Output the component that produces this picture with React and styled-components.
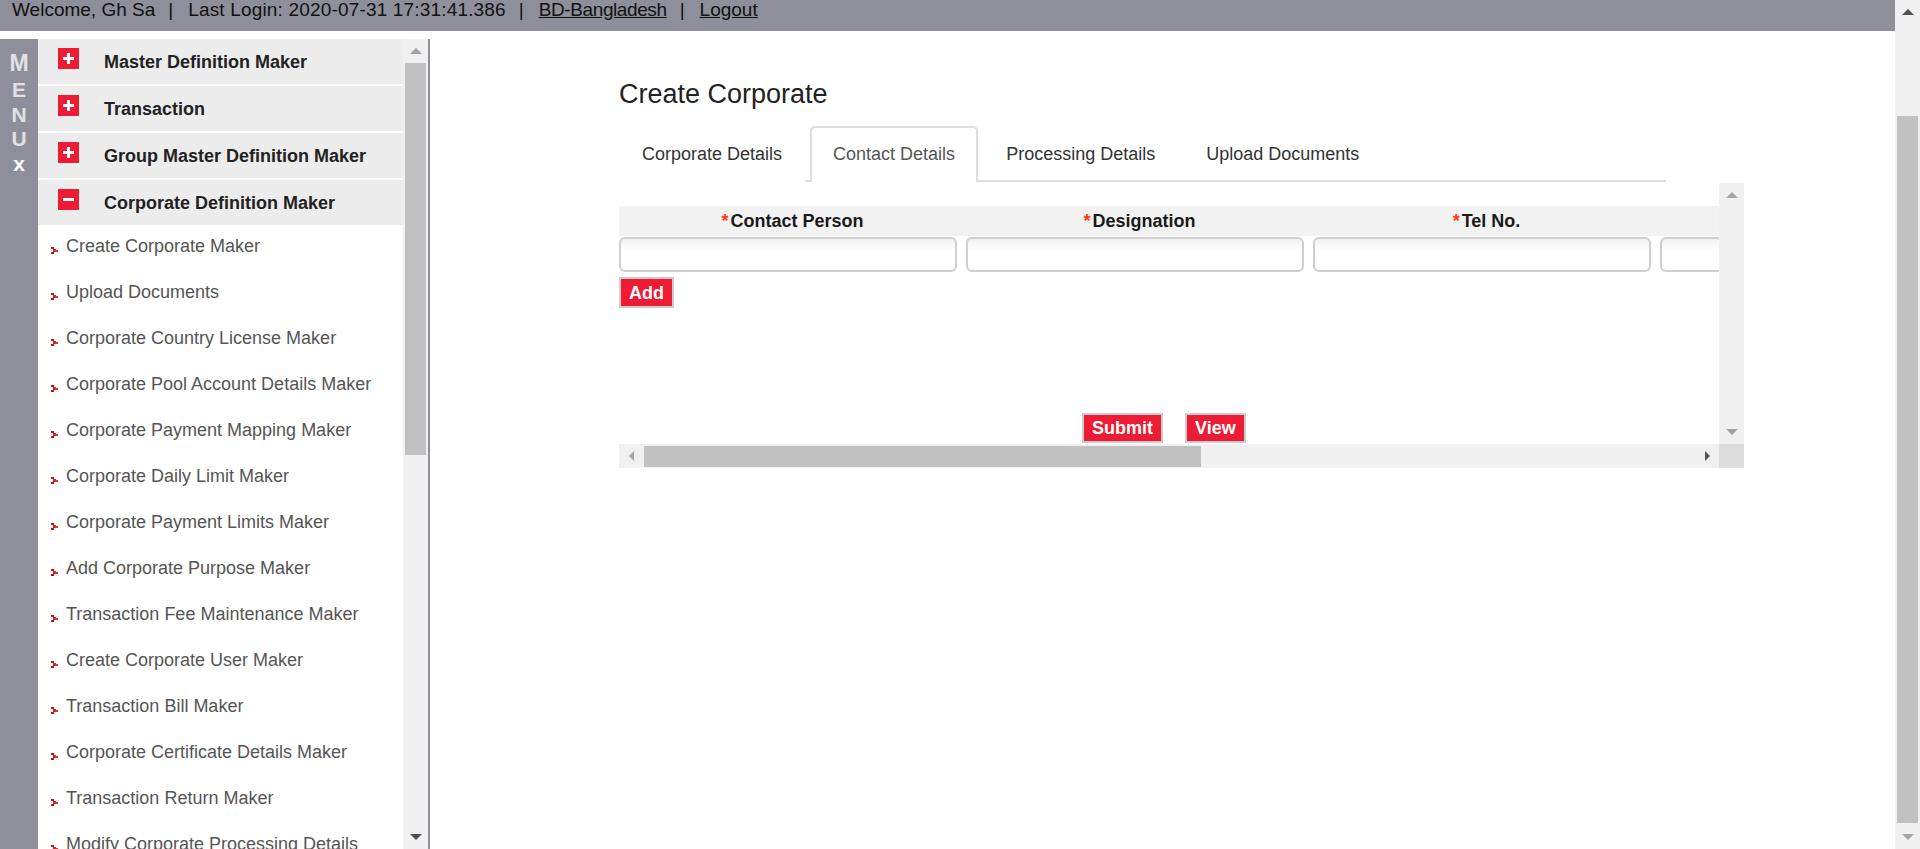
import React from 'react';
import styled, { createGlobalStyle, css } from 'styled-components';

const GlobalStyle = createGlobalStyle`
  html, body {
    margin: 0;
    padding: 0;
    height: 100%;
    overflow: hidden;
  }
  body {
    font-family: 'Liberation Sans', Arial, sans-serif;
    background: #fff;
  }
  #root {
    height: 100%;
  }
`;

const RED = '#ed1b34';
const SLATE = '#8f8f9b';

const Shell = styled.div`
  display: flex;
  height: 849px;
  overflow: hidden;
`;

const Page = styled.div`
  flex: 1;
  min-width: 0;
  display: flex;
  flex-direction: column;
`;

const TopBar = styled.div`
  height: 31px;
  box-sizing: border-box;
  flex-shrink: 0;
  background: ${SLATE};
  display: flex;
  align-items: flex-start;
  padding: 1px 0 0 12px;
  font-size: 19px;
  line-height: 18px;
  color: #111;
  white-space: nowrap;
`;

const TopText = styled.span`
  letter-spacing: ${(p) => p.$track || 0}px;
`;

const Sep = styled.span`
  margin: 0 15px 0 13px;
`;

const TopLink = styled.a`
  color: #111;
  text-decoration: underline;
  letter-spacing: ${(p) => p.$track || 0}px;
`;

const Body = styled.div`
  flex: 1;
  min-height: 0;
  display: flex;
  padding-top: 8px;
`;

/* ---------- sidebar ---------- */

const Sidebar = styled.aside`
  display: flex;
  height: 100%;
  border-right: 2px solid ${SLATE};
  flex-shrink: 0;
`;

const MenuStrip = styled.div`
  width: 38px;
  background: ${SLATE};
  display: flex;
  flex-direction: column;
  align-items: center;
  padding-top: 10px;
  box-sizing: border-box;
  font-family: 'Liberation Sans', Arial, sans-serif;
  font-weight: bold;
`;

const StripLetter = styled.span`
  font-size: ${(p) => (p.$big ? '23px' : '21px')};
  line-height: ${(p) => (p.$big ? '29px' : '24.5px')};
  color: ${(p) => (p.$close ? '#fff' : '#e2e2e6')};
`;

const MenuPanel = styled.nav`
  width: 365px;
  overflow: hidden;
  background: #fff;
`;

const GroupHead = styled.div`
  height: 45px;
  margin-bottom: 2px;
  background: #ececec;
  display: flex;
  align-items: flex-start;
  padding-left: 20px;
`;

const HeadIcon = styled.svg`
  margin-top: 9px;
  flex-shrink: 0;
`;

const HeadText = styled.span`
  margin-left: 25px;
  padding-top: 2px;
  font-size: 18px;
  font-weight: bold;
  line-height: 43px;
  color: #222;
  white-space: nowrap;
`;

const SubItem = styled.div`
  height: 46px;
  box-sizing: border-box;
  padding-left: 13px;
  display: flex;
  align-items: flex-start;
  font-size: 18px;
  line-height: 38px;
  color: #555;
  white-space: nowrap;
`;

const Bullet = styled.svg`
  margin: 20px 8px 0 0;
  flex-shrink: 0;
`;

/* ---------- fake scrollbars ---------- */

const VBar = styled.div`
  width: 25px;
  flex-shrink: 0;
  background: #f0f0f0;
  display: flex;
  flex-direction: column;
`;

const HBar = styled.div`
  height: 24px;
  background: #f0f0f0;
  display: flex;
`;

const ArrowBtn = styled.div`
  width: ${(p) => (p.$wide ? '25px' : '24px')};
  height: 24px;
  flex-shrink: 0;
  display: flex;
  align-items: center;
  justify-content: center;
`;

const Arrow = styled.span`
  width: 0;
  height: 0;
  ${(p) =>
    p.$dir === 'up' &&
    css`
      border-left: 6px solid transparent;
      border-right: 6px solid transparent;
      border-bottom: 6px solid ${p.$c};
    `}
  ${(p) =>
    p.$dir === 'down' &&
    css`
      border-left: 6px solid transparent;
      border-right: 6px solid transparent;
      border-top: 6px solid ${p.$c};
    `}
  ${(p) =>
    p.$dir === 'left' &&
    css`
      border-top: 5px solid transparent;
      border-bottom: 5px solid transparent;
      border-right: 5px solid ${p.$c};
    `}
  ${(p) =>
    p.$dir === 'right' &&
    css`
      border-top: 5px solid transparent;
      border-bottom: 5px solid transparent;
      border-left: 5px solid ${p.$c};
    `}
`;

const VTrack = styled.div`
  flex: 1;
  padding: ${(p) => p.$offset}px 2px 0;
`;

const HTrack = styled.div`
  flex: 1;
  padding: 2px 0 1px ${(p) => p.$offset}px;
`;

const VThumb = styled.div`
  height: ${(p) => p.$len}px;
  background: #c1c1c1;
`;

const HThumb = styled.div`
  width: ${(p) => p.$len}px;
  height: 100%;
  background: #c1c1c1;
`;

const Corner = styled.div`
  background: #dcdcdc;
`;

const DARK = '#505050';
const LIGHT = '#a3a3a3';

const VScroll = ({ up = LIGHT, down = LIGHT, offset = 0, len = 0 }) => (
  <VBar>
    <ArrowBtn $wide>
      <Arrow $dir="up" $c={up} />
    </ArrowBtn>
    <VTrack $offset={offset}>{len > 0 && <VThumb $len={len} />}</VTrack>
    <ArrowBtn $wide>
      <Arrow $dir="down" $c={down} />
    </ArrowBtn>
  </VBar>
);

/* ---------- main ---------- */

const Main = styled.main`
  flex: 1;
  min-width: 0;
  padding-left: 189px;
  overflow: hidden;
`;

const Title = styled.h1`
  margin: 40px 0 16px;
  font-size: 27px;
  font-weight: normal;
  line-height: 31px;
  color: #222;
`;

const TabBar = styled.div`
  width: 1047px;
  height: 56px;
  display: flex;
  background: linear-gradient(#dedede, #dedede) no-repeat;
  background-position: 186px 100%;
  background-size: calc(100% - 186px) 2px;
`;

const Tab = styled.div`
  box-sizing: border-box;
  height: 56px;
  margin-right: 5px;
  padding: 16px 21px 0;
  border: 2px solid transparent;
  border-bottom: none;
  border-radius: 5px 5px 0 0;
  font-size: 18px;
  line-height: 20px;
  color: #333;
  white-space: nowrap;
  ${(p) =>
    p.$active &&
    css`
      background: #fff;
      border-color: #dedede;
      color: #555;
    `}
`;

const TableBox = styled.div`
  margin-top: 1px;
  width: 1125px;
  display: grid;
  grid-template-columns: 1fr 25px;
  grid-template-rows: 261px 24px;
`;

const Viewport = styled.div`
  overflow: hidden;
  display: flex;
  flex-direction: column;
  padding-top: 23px;
`;

const HeadRow = styled.div`
  display: flex;
  height: 30px;
  background: #f2f2f2;
  flex-shrink: 0;
`;

const HeadCell = styled.div`
  width: 347px;
  flex-shrink: 0;
  text-align: center;
  font-size: 18px;
  font-weight: bold;
  line-height: 30px;
  color: #1a1a1a;
  white-space: nowrap;
`;

const Req = styled.span`
  color: #ff3b14;
  margin-right: 2px;
`;

const InputRow = styled.div`
  display: flex;
  gap: 9px;
  margin-top: 1px;
`;

const Field = styled.input`
  width: 338px;
  height: 35px;
  flex-shrink: 0;
  box-sizing: border-box;
  border: 2px solid #cfcfcf;
  border-radius: 6px;
  background: linear-gradient(#f1f1f1, #fff 12px);
  outline: none;
`;

const RedButton = styled.button`
  height: 31px;
  box-sizing: border-box;
  padding: 0 8px;
  border: 2px solid #cccccc;
  background: ${RED};
  color: #fff;
  font-family: 'Liberation Sans', Arial, sans-serif;
  font-size: 18px;
  font-weight: bold;
  line-height: 26px;
  cursor: pointer;
`;

const AddRow = styled.div`
  margin-top: 5px;
`;

const ActionRow = styled.div`
  margin-top: auto;
  margin-bottom: 1px;
  padding-left: 463px;
  display: flex;
  gap: 22px;
  & > button {
    height: 30px;
  }
`;

const groups = [
  { label: 'Master Definition Maker', open: false },
  { label: 'Transaction', open: false },
  { label: 'Group Master Definition Maker', open: false },
  { label: 'Corporate Definition Maker', open: true },
];

const subItems = [
  'Create Corporate Maker',
  'Upload Documents',
  'Corporate Country License Maker',
  'Corporate Pool Account Details Maker',
  'Corporate Payment Mapping Maker',
  'Corporate Daily Limit Maker',
  'Corporate Payment Limits Maker',
  'Add Corporate Purpose Maker',
  'Transaction Fee Maintenance Maker',
  'Create Corporate User Maker',
  'Transaction Bill Maker',
  'Corporate Certificate Details Maker',
  'Transaction Return Maker',
  'Modify Corporate Processing Details',
];

const tabs = ['Corporate Details', 'Contact Details', 'Processing Details', 'Upload Documents'];
const columns = ['Contact Person', 'Designation', 'Tel No.', ''];

const ToggleIcon = ({ open }) => (
  <HeadIcon width="21" height="21" viewBox="0 0 21 21">
    <rect width="21" height="21" fill={RED} />
    <rect x="5" y="9" width="11" height="3" fill="#fff" />
    {!open && <rect x="9" y="5" width="3" height="11" fill="#fff" />}
  </HeadIcon>
);

const Chevron = () => (
  <Bullet width="7" height="7" viewBox="0 0 7 7">
    <rect x="0" y="0" width="3" height="2" fill="#b81414" />
    <rect x="2" y="2" width="3" height="3" fill="#e01c1c" />
    <rect x="4" y="3" width="3" height="2" fill="#e83030" />
    <rect x="0" y="5" width="3" height="2" fill="#b81414" />
  </Bullet>
);

const App = () => {
  return (
    <>
      <GlobalStyle />
      <Shell>
        <Page>
          <TopBar>
            <TopText>Welcome, Gh Sa</TopText>
            <Sep>|</Sep>
            <TopText $track={0.17}>Last Login: 2020-07-31 17:31:41.386</TopText>
            <Sep>|</Sep>
            <TopLink href="#" $track={-0.4}>
              BD-Bangladesh
            </TopLink>
            <Sep>|</Sep>
            <TopLink href="#">Logout</TopLink>
          </TopBar>
          <Body>
            <Sidebar>
              <MenuStrip>
                <StripLetter $big>M</StripLetter>
                <StripLetter>E</StripLetter>
                <StripLetter>N</StripLetter>
                <StripLetter>U</StripLetter>
                <StripLetter $close>x</StripLetter>
              </MenuStrip>
              <MenuPanel>
                {groups.map((g) => (
                  <GroupHead key={g.label}>
                    <ToggleIcon open={g.open} />
                    <HeadText>{g.label}</HeadText>
                  </GroupHead>
                ))}
                {subItems.map((s) => (
                  <SubItem key={s}>
                    <Chevron />
                    {s}
                  </SubItem>
                ))}
              </MenuPanel>
              <VScroll up={LIGHT} down={DARK} offset={0} len={392} />
            </Sidebar>
            <Main>
              <Title>Create Corporate</Title>
              <TabBar>
                {tabs.map((t) => (
                  <Tab key={t} $active={t === 'Contact Details'}>
                    {t}
                  </Tab>
                ))}
              </TabBar>
              <TableBox>
                <Viewport>
                  <HeadRow>
                    {columns.map((c, i) => (
                      <HeadCell key={i}>
                        {c && <Req>*</Req>}
                        {c}
                      </HeadCell>
                    ))}
                  </HeadRow>
                  <InputRow>
                    {columns.map((c, i) => (
                      <Field key={i} type="text" />
                    ))}
                  </InputRow>
                  <AddRow>
                    <RedButton>Add</RedButton>
                  </AddRow>
                  <ActionRow>
                    <RedButton>Submit</RedButton>
                    <RedButton>View</RedButton>
                  </ActionRow>
                </Viewport>
                <VScroll up={LIGHT} down={LIGHT} />
                <HBar>
                  <ArrowBtn>
                    <Arrow $dir="left" $c={LIGHT} />
                  </ArrowBtn>
                  <HTrack $offset={1}>
                    <HThumb $len={557} />
                  </HTrack>
                  <ArrowBtn>
                    <Arrow $dir="right" $c={DARK} />
                  </ArrowBtn>
                </HBar>
                <Corner />
              </TableBox>
            </Main>
          </Body>
        </Page>
        <VScroll up={DARK} down={LIGHT} offset={92} len={707} />
      </Shell>
    </>
  );
};

export default App;
